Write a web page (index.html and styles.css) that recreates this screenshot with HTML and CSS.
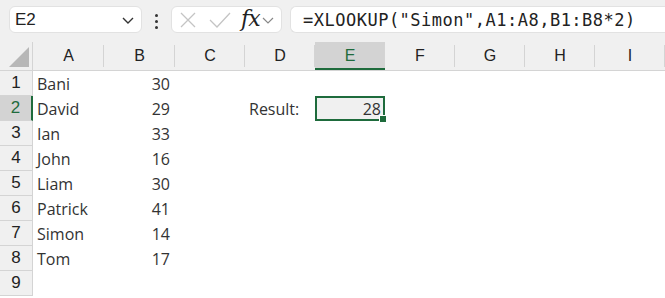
FILE: index.html
```html
<!DOCTYPE html>
<html lang="en">

<head>
    <meta charset="UTF-8">
    <meta name="viewport" content="width=device-width, initial-scale=1.0">
    <title>XLOOKUP</title>

    <link rel="stylesheet" href="styles.css">
</head>

<body>
    <!-- formula bar -->
    <div class="toolbar">
        <div class="name-box">
            <span>E2</span>
            <svg width="14" height="14" viewBox="0 0 14 14"><path d="M2 5 L7 10 L12 5" fill="none" stroke="#333" stroke-width="1.4"/></svg>
        </div>
        <div class="dots"><i></i><i></i><i></i></div>
        <div class="fx-box">
            <svg width="18" height="18" viewBox="0 0 18 18"><path d="M2 2 L16 16 M16 2 L2 16" stroke="#c4c4c4" stroke-width="1.3"/></svg>
            <svg width="22" height="18" viewBox="0 0 22 18"><path d="M1 9 L8 16 L21 2" fill="none" stroke="#c4c4c4" stroke-width="1.3"/></svg>
            <span class="fx">fx</span>
            <svg width="12" height="12" viewBox="0 0 12 12"><path d="M1 4 L6 9 L11 4" fill="none" stroke="#888" stroke-width="1.2"/></svg>
        </div>
        <div class="formula">=XLOOKUP("Simon",A1:A8,B1:B8*2)</div>
    </div>

    <!-- column headers -->
    <div class="col-head">
        <div class="corner"><span class="tri"></span></div>
        <div class="ch">A</div>
        <div class="ch">B</div>
        <div class="ch">C</div>
        <div class="ch">D</div>
        <div class="ch active">E</div>
        <div class="ch">F</div>
        <div class="ch">G</div>
        <div class="ch">H</div>
        <div class="ch">I</div>
    </div>

    <!-- cells -->
    <div class="sheet" id="sheet"></div>

    <script>
        const data = [
            ['Bani', 30], ['David', 29], ['Ian', 33], ['John', 16],
            ['Liam', 30], ['Patrick', 41], ['Simon', 14], ['Tom', 17], ['', '']
        ];

        const sheet = document.getElementById('sheet');
        data.forEach((row, i) => {
            const n = i + 1;
            let html = `<div class="rh ${n === 2 ? 'active' : ''}">${n}</div>`;
            html += `<div class="c">${row[0]}</div>`;
            html += `<div class="c num">${row[1]}</div>`;
            html += `<div class="c"></div>`;
            html += `<div class="c">${n === 2 ? 'Result:' : ''}</div>`;
            html += n === 2 ? `<div class="c num sel">28<span class="handle"></span></div>` : `<div class="c"></div>`;
            html += `<div class="c"></div><div class="c"></div><div class="c"></div><div class="c"></div>`;
            sheet.insertAdjacentHTML('beforeend', html);
        });
    </script>
</body>

</html>
```

FILE: styles.css
```css
body {
    margin: 0;
    background: #fff;
    font-family: 'Open Sans', sans-serif;
    color: #333;
    overflow: hidden;
}

.toolbar {
    background: #f0f0f0;
    height: 42px;
    display: flex;
    align-items: flex-start;
    padding: 6px 0 0 9px;
    box-sizing: border-box;
}

.name-box,
.fx-box,
.formula {
    background: #fff;
    border: 1px solid #e2e2e2;
    border-radius: 6px;
    height: 27px;
    box-sizing: border-box;
    display: flex;
    align-items: center;
}

.name-box {
    width: 133px;
    justify-content: space-between;
    padding: 0 6px 0 5px;
    font-family: 'Liberation Sans', sans-serif;
    font-size: 17px;
    color: #222;
}

.dots {
    width: 29px;
    display: flex;
    flex-direction: column;
    align-items: center;
    gap: 3px;
    padding-top: 8px;
}

.dots i {
    width: 3px;
    height: 3px;
    border-radius: 50%;
    background: #333;
}

.fx-box {
    width: 111px;
    padding: 0 4px 0 7px;
    gap: 0;
}

.fx-box svg:nth-child(2) {
    margin-left: 12px;
}

.fx {
    font-family: 'DejaVu Serif', serif;
    font-style: italic;
    font-size: 22px;
    color: #222;
    margin: -3px 2px 0 10px;
    letter-spacing: -1px;
}

.formula {
    flex: 1;
    margin-left: 8px;
    border-right: none;
    border-radius: 6px 0 0 6px;
    padding-left: 12px;
    font-family: 'DejaVu Sans Mono', monospace;
    font-size: 17px;
    letter-spacing: 0.5px;
    color: #222;
}

.col-head {
    display: grid;
    grid-template-columns: 33px 71px 71px 70px 70px 70px 70px 70px 70px 70px;
    height: 28px;
    background: #f0f0f0;
    border-bottom: 1px solid #d4d4d4;
}

.corner {
    border-right: 1px solid #d4d4d4;
    position: relative;
}

.corner .tri {
    position: absolute;
    right: 3px;
    bottom: 3px;
    width: 0;
    height: 0;
    border-left: 20px solid transparent;
    border-bottom: 20px solid #b7b7b7;
}

.ch {
    display: flex;
    align-items: center;
    justify-content: center;
    font-family: 'Liberation Sans', sans-serif;
    font-size: 16px;
    color: #222;
    position: relative;
}

.ch::after {
    content: '';
    position: absolute;
    right: 0;
    top: 3px;
    bottom: 3px;
    width: 1px;
    background: #d4d4d4;
}

.ch.active {
    background: #d3d3d3;
    color: #1e6b3c;
    box-shadow: inset 0 -2px 0 #1e6b3c;
}

.sheet {
    display: grid;
    grid-template-columns: 33px 71px 71px 70px 70px 70px 70px 70px 70px 70px;
    grid-auto-rows: 25px;
}

.rh {
    background: #f0f0f0;
    border-right: 1px solid #d4d4d4;
    border-bottom: 1px solid #d4d4d4;
    box-sizing: border-box;
    display: flex;
    align-items: center;
    justify-content: center;
    font-family: 'Liberation Sans', sans-serif;
    font-size: 17px;
    color: #222;
}

.rh.active {
    background: #d3d3d3;
    color: #1e6b3c;
    border-right: 2px solid #1e6b3c;
}

.c {
    display: flex;
    align-items: center;
    padding: 0 4px;
    font-size: 16px;
    color: #333;
    white-space: nowrap;
}

.c.num {
    justify-content: flex-end;
    padding-right: 5px;
}

.c.sel {
    position: relative;
    background: #f0f0f0;
    border: 2px solid #1e6b3c;
    box-sizing: border-box;
    padding-right: 2px;
}

.handle {
    position: absolute;
    right: -4px;
    bottom: -4px;
    width: 6px;
    height: 6px;
    background: #1e6b3c;
    border: 1px solid #fff;
}
```
